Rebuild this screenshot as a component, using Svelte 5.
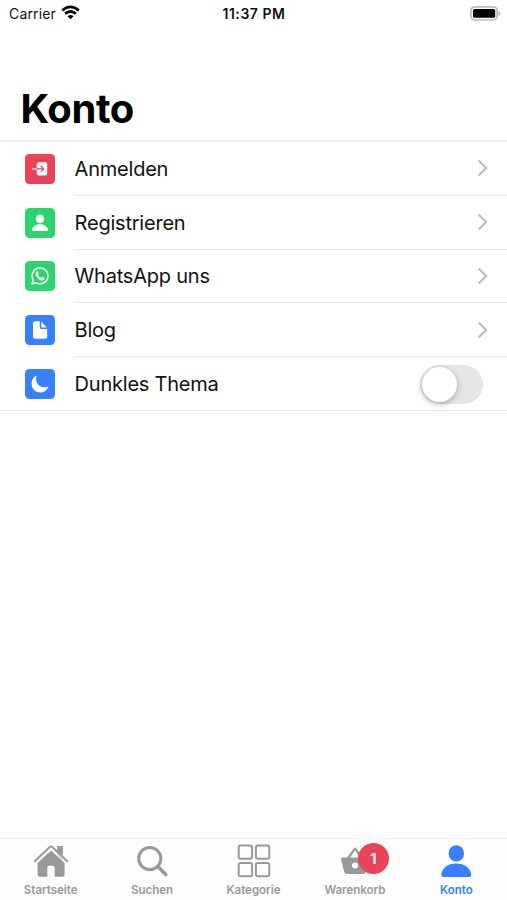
<script>
  const rows = [
    { label: 'Anmelden', icon: 'login', color: '#eb445a' },
    { label: 'Registrieren', icon: 'person', color: '#2dd36f' },
    { label: 'WhatsApp uns', icon: 'whatsapp', color: '#2dd36f' },
    { label: 'Blog', icon: 'document', color: '#3880ff' },
    { label: 'Dunkles Thema', icon: 'moon', color: '#3880ff', toggle: true }
  ];
  const tabs = [
    { label: 'Startseite', icon: 'home' },
    { label: 'Suchen', icon: 'search' },
    { label: 'Kategorie', icon: 'grid' },
    { label: 'Warenkorb', icon: 'basket', badge: 1 },
    { label: 'Konto', icon: 'person', active: true }
  ];
  let dark = $state(false);
</script>

<div class="app">
  <div class="status">
    <div class="carrier">
      <span>Carrier</span>
      <svg width="19" height="15" viewBox="0 0 19 15">
        <g fill="none" stroke="#000" stroke-width="2.7">
          <path d="M1.2 5.4Q9.5-1.8 17.8 5.4" />
          <path d="M4.1 8.8Q9.5 4.2 14.9 8.8" />
        </g>
        <path d="M9.5 14.2 6.5 11.3Q9.5 8.8 12.5 11.3Z" />
      </svg>
    </div>
    <span class="time">11:37 PM</span>
    <svg class="battery" width="31" height="15" viewBox="0 0 31 15">
      <rect x=".9" y=".8" width="26.2" height="13.2" rx="4" fill="#fff" stroke="#bcbcbc" stroke-width="1.7" />
      <rect x="3" y="3" width="22.2" height="8.8" rx="1.6" />
      <path d="M28.4 5v5q2-1 2-2.5T28.4 5Z" fill="#b8b8b8" />
    </svg>
  </div>

  <header><h1>Konto</h1></header>

  <main>
    {#each rows as row}
      <div class="row" class:last={row.toggle}>
        <div class="tile" style:background={row.color}>
          {#if row.icon === 'login'}
            <svg width="18" height="18" viewBox="0 0 18 18">
              <rect x="5.8" y="2.2" width="10.4" height="13.3" rx="2" fill="#fff" />
              <path d="M1.4 8.8h4.4" stroke="#fff" stroke-width="1.2" stroke-linecap="round" />
              <path d="M5.8 8.8h6.8M10 6l2.8 2.8L10 11.6" fill="none" stroke="#eb445a" stroke-width="1.2" stroke-linecap="round" stroke-linejoin="round" />
            </svg>
          {:else if row.icon === 'person'}
            <svg width="18" height="18" viewBox="0 0 18 18" fill="#fff">
              <ellipse cx="9" cy="4.8" rx="4.1" ry="4.4" />
              <path d="M1 15.8C1.4 12.2 5 10.2 9 10.2s7.6 2 8 5.6q0 1.2-1.2 1.2H2.2Q1 17 1 15.8Z" />
            </svg>
          {:else if row.icon === 'whatsapp'}
            <svg width="20" height="20" viewBox="0 0 20 20">
              <path d="m2 18 1.2-4.2A7.9 7.9 0 1 1 6.3 16.8Z" fill="none" stroke="#fff" stroke-width="1.5" stroke-linejoin="round" />
              <path d="M6.6 5.6q.7-.6 1.2 0l.9 2q.2.5-.8 1.4 1.2 2.2 3.3 3 .8-1.2 1.3-1.1l2 1q.4.2 0 1.2-.7 1.7-2.8 1.5Q7.6 13.7 5.8 9q-.5-2.1.8-3.4Z" fill="#fff" />
            </svg>
          {:else if row.icon === 'document'}
            <svg width="18" height="20" viewBox="0 0 18 20" fill="#fff">
              <path d="M4 1.2h4.8v6.2q0 1.5 1.5 1.5h5.9v7.8q0 2-2 2H4q-2 0-2-2V3.2q0-2 2-2Z" />
              <path d="M10.2 1.6 15.8 7.4h-4.7q-.9 0-.9-.9Z" />
            </svg>
          {:else}
            <svg width="18" height="18" viewBox="0 0 18 18" fill="#fff">
              <path d="M5.7.5C3.2 8.4 9 14.2 17.5 11.5 16 15.2 13 17.5 9.3 17.5A8.8 8.8 0 0 1 .5 8.7C.5 5 2.5 1.8 5.7.5Z" />
            </svg>
          {/if}
        </div>
        <div class="line">
          <span class="label">{row.label}</span>
          {#if row.toggle}
            <button class="toggle" class:on={dark} role="switch" aria-checked={dark} aria-label={row.label} onclick={() => (dark = !dark)}>
              <span class="knob"></span>
            </button>
          {:else}
            <svg class="chevron" width="11" height="18" viewBox="0 0 11 18">
              <path d="m1.6 1.6 7.6 7.4-7.6 7.4" fill="none" stroke="#bcbcbc" stroke-width="2.1" />
            </svg>
          {/if}
        </div>
      </div>
    {/each}
  </main>

  <nav>
    {#each tabs as tab}
      <div class="tab" class:active={tab.active}>
        <div class="glyph">
          {#if tab.icon === 'home'}
            <svg width="36" height="36" viewBox="0 0 36 36" fill="currentColor">
              <path d="M24.2 3h5.4v14L24.2 12Z" />
              <path d="m1.8 18.3 15-14.2q1.2-1.1 2.4 0l15 14.2" fill="none" stroke="#fdfdfd" stroke-width="3.6" />
              <path d="M18 7.4 31.6 20v11.4q0 2.3-2.3 2.3h-7.6v-9.2q0-1.7-1.7-1.7h-4q-1.7 0-1.7 1.7v9.2H6.9q-2.3 0-2.3-2.3V20Z" />
              <path d="m1.8 18.3 15-14.2q1.2-1.1 2.4 0l15 14.2" fill="none" stroke="currentColor" stroke-width="2" stroke-linecap="round" />
              <path d="M24.2 3h5.4v10.9L24.2 8.8Z" />
            </svg>
          {:else if tab.icon === 'search'}
            <svg width="36" height="36" viewBox="0 0 36 36" fill="none" stroke="currentColor">
              <circle cx="15.8" cy="15.6" r="11.1" stroke-width="3.1" />
              <path d="m23.8 23.6 8 8" stroke-width="3.5" stroke-linecap="round" />
            </svg>
          {:else if tab.icon === 'grid'}
            <svg width="36" height="36" viewBox="0 0 36 36" fill="none" stroke="currentColor" stroke-width="2">
              <rect x="2.7" y="2.5" width="13.4" height="13.2" rx="2" />
              <rect x="19.9" y="2.5" width="13.4" height="13.2" rx="2" />
              <rect x="2.7" y="20" width="13.4" height="13.2" rx="2" />
              <rect x="19.9" y="20" width="13.4" height="13.2" rx="2" />
            </svg>
          {:else if tab.icon === 'basket'}
            <svg width="36" height="36" viewBox="0 0 36 36" fill="currentColor">
              <path d="m10.8 15.5 7.2-9.8 7.2 9.8" fill="none" stroke="currentColor" stroke-width="2.2" stroke-linejoin="round" />
              <path d="M5.5 14.5h25q1.8 0 1.5 1.8l-3.2 12.6q-.6 2-2.6 2H9.8q-2 0-2.6-2L4 16.3Q3.7 14.5 5.5 14.5Z" />
              <circle cx="18" cy="22.4" r="3" fill="#fff" />
            </svg>
          {:else}
            <svg width="36" height="36" viewBox="0 0 36 36" fill="currentColor">
              <ellipse cx="18.3" cy="10.4" rx="7.7" ry="8.2" />
              <path d="M3.3 32.1c.7-7.5 6.9-11.6 15-11.6s14.3 4.1 15 11.6q.1 2-2 2h-26q-2.1 0-2-2Z" />
            </svg>
          {/if}
          {#if tab.badge}<span class="badge">{tab.badge}</span>{/if}
        </div>
        <span class="name">{tab.label}</span>
      </div>
    {/each}
  </nav>
</div>

<style>
  :global(body) { margin: 0; background: #fff; }
  .app {
    height: 900px;
    display: flex;
    flex-direction: column;
    background: #fff;
    color: #111;
    font-family: Inter, "Liberation Sans", sans-serif;
  }
  .status {
    height: 27px;
    padding: 0 6px 0 9px;
    box-sizing: border-box;
    display: grid;
    grid-template-columns: 1fr auto 1fr;
    align-items: center;
    font-size: 14px;
    line-height: 27px;
  }
  .carrier { display: flex; align-items: center; gap: 5px; letter-spacing: 0.15px; }
  .carrier svg { margin-top: -2px; }
  .time { font-weight: 600; letter-spacing: 0.55px; margin-right: 2px; }
  .battery { justify-self: end; }
  header {
    height: 115px;
    box-sizing: border-box;
    border-bottom: 2px solid #ececec;
    display: flex;
    align-items: flex-end;
    padding: 0 20.5px 7px;
  }
  h1 { margin: 0; font-size: 40px; line-height: 48px; font-weight: 700; letter-spacing: -0.4px; color: #000; }
  main { flex: 1; }
  .row { display: flex; height: 53.8px; padding-left: 25px; align-items: center; box-sizing: border-box; }
  .row.last { border-bottom: 1px solid #e9e9e9; }
  .tile { width: 30px; height: 30px; border-radius: 4.5px; display: flex; align-items: center; justify-content: center; flex: none; }
  .line {
    flex: 1;
    height: 100%;
    box-sizing: border-box;
    margin-left: 19px;
    padding-right: 19px;
    border-bottom: 1px solid #e9e9e9;
    display: flex;
    align-items: center;
    justify-content: space-between;
  }
  .last .line { border-bottom: 0; padding-right: 24px; }
  .label { font-size: 20px; line-height: 26px; letter-spacing: -0.22px; padding: 1px 0 0 0.6px; }
  .toggle {
    width: 63px;
    height: 39px;
    margin-top: 1px;
    padding: 1.5px;
    border: 0;
    border-radius: 20px;
    background: #e6e6e6;
    display: flex;
    align-items: center;
  }
  .toggle.on { background: #3880ff; justify-content: flex-end; }
  .knob { width: 35px; height: 35px; border-radius: 50%; background: #fff; box-shadow: 0 2px 6px rgba(0, 0, 0, 0.28); }
  nav { height: 62px; box-sizing: border-box; border-top: 1px solid #f0f0f0; display: flex; background: #fdfdfd; }
  .tab { flex: 1; display: flex; flex-direction: column; align-items: center; color: #999; padding-top: 4px; }
  .tab.active { color: #3880ff; }
  .glyph { position: relative; height: 36px; }
  .glyph svg { display: block; }
  .name { font-size: 11.5px; font-weight: 600; line-height: 16px; margin-top: 3px; white-space: nowrap; }
  .badge {
    position: absolute;
    left: 21px;
    top: 0;
    width: 31px;
    height: 31px;
    border-radius: 50%;
    background: #eb445a;
    color: #fff;
    font-size: 15px;
    font-weight: 600;
    line-height: 32px;
    text-align: center;
  }
</style>
